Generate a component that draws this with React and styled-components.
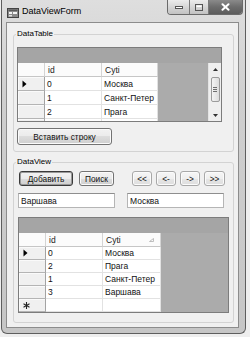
import styled, { createGlobalStyle } from "styled-components";

const GlobalStyle = createGlobalStyle`
  html, body {
    margin: 0;
    padding: 0;
    background: #eeeeee;
  }
  body {
    width: 250px;
    height: 337px;
    overflow: hidden;
    font-family: "Liberation Sans", Arial, sans-serif;
    color: #111;
  }
`;

const Page = styled.div`
  width: 250px;
  height: 337px;
  padding-left: 1px;
  box-sizing: border-box;
  background: #eeeeee;
`;

const Window = styled.div`
  width: 245px;
  height: 334px;
  box-sizing: border-box;
  border: 1px solid #5e5e5e;
  border-top: none;
  border-radius: 0 0 6px 6px;
  background: linear-gradient(180deg, #dedede 0%, #cfcfcf 30%, #c6c6c6 100%);
  display: flex;
  flex-direction: column;
`;

const TitleBar = styled.div`
  height: 22px;
  flex: none;
  display: flex;
  align-items: flex-start;
  padding: 0 2px 0 5px;
`;

const TitleIcon = styled.svg`
  margin-top: 8px;
  flex: none;
`;

const TitleText = styled.div`
  margin: 6px 0 0 3px;
  font-size: 9px;
  line-height: 11px;
  color: #000;
`;

const CaptionButtons = styled.div`
  margin-left: auto;
  display: flex;
  height: 15px;
  border: 1px solid #6a6a6a;
  border-top: none;
  border-radius: 0 0 4px 4px;
  overflow: hidden;
  box-sizing: border-box;
`;

const CaptionButton = styled.div`
  width: ${(p) => p.$w}px;
  display: flex;
  align-items: center;
  justify-content: center;
  box-sizing: border-box;
  border-left: ${(p) => (p.$first ? "none" : "1px solid #7a7a7a")};
  background: ${(p) =>
    p.$close
      ? "linear-gradient(180deg, #8a8a8a 0%, #6c6c6c 50%, #5c5c5c 100%)"
      : "linear-gradient(180deg, #ececec 0%, #d6d6d6 50%, #c2c2c2 100%)"};
`;

const Client = styled.div`
  flex: 1;
  margin: 0 6px 5px 4px;
  border: 1px solid #8c8c8c;
  background: #f0f0f0;
  padding: 6px 4px 0 6px;
  display: flex;
  flex-direction: column;
  gap: 5px;
`;

const GroupBox = styled.fieldset`
  margin: 0;
  padding: 0;
  min-width: 0;
  border: 1px solid #d3d3d3;
  border-radius: 3px;
`;

const Legend = styled.legend`
  padding: 0 1px;
  margin-left: 2px;
  font-size: 8px;
  line-height: 10px;
  font-weight: normal;
  color: #000;
`;

const GroupBody = styled.div`
  padding: ${(p) => p.$pad};
  display: flex;
  flex-direction: column;
  align-items: flex-start;
  gap: ${(p) => p.$gap};
`;

const Button = styled.button`
  width: ${(p) => p.$w}px;
  height: ${(p) => p.$h || 15}px;
  padding: 0;
  margin: 0;
  box-sizing: border-box;
  font-family: "Liberation Sans", Arial, sans-serif;
  font-size: 8.3px;
  color: #111;
  border: 1px solid ${(p) => (p.$default ? "#3a3a3a" : p.$light ? "#a8a8a8" : "#737373")};
  border-radius: 3px;
  box-shadow: inset 0 0 0 1px ${(p) => (p.$default ? "#9a9a9a" : "#fbfbfb")};
  background: ${(p) =>
    p.$light
      ? "linear-gradient(180deg, #f6f6f6 0%, #efefef 50%, #e6e6e6 50%, #dedede 100%)"
      : "linear-gradient(180deg, #f2f2f2 0%, #ebebeb 50%, #dddddd 50%, #cfcfcf 100%)"};
`;

const ButtonRow = styled.div`
  display: flex;
  gap: 6px;
  margin-left: 1px;
`;

const NavGroup = styled.div`
  display: flex;
  gap: 4px;
  margin-left: 12px;
`;

const FieldRow = styled.div`
  display: flex;
  gap: 12px;
`;

const TextBox = styled.input`
  width: 97px;
  height: 15px;
  box-sizing: border-box;
  margin: 0;
  padding: 0 2px;
  border: 1px solid #b5b5b5;
  border-top-color: #8e8e8e;
  background: #fff;
  font-family: "Liberation Sans", Arial, sans-serif;
  font-size: 8.5px;
  color: #111;
  outline: none;
`;

const GridFrame = styled.div`
  width: ${(p) => p.$w}px;
  height: ${(p) => p.$h}px;
  margin-top: ${(p) => p.$mt || 0}px;
  box-sizing: border-box;
  border: 1px solid #7c7c7c;
  background: #ababab;
  display: flex;
  flex-direction: column;
  overflow: hidden;
`;

const GridBand = styled.div`
  height: 15px;
  flex: none;
  background: #a5a5a5;
`;

const GridBody = styled.div`
  flex: 1;
  min-height: 0;
  display: flex;
`;

const Table = styled.div`
  flex: 1;
  display: grid;
  grid-template-columns: 27px 57px ${(p) => p.$last}px;
  grid-template-rows: 14px;
  grid-auto-rows: ${(p) => p.$row}px;
  align-content: start;
  justify-content: start;
  overflow: hidden;
  font-size: 8.5px;
`;

const HeaderCell = styled.div`
  background: #fbfbfb;
  border-right: 1px solid #d4d4d4;
  border-bottom: 1px solid #c6c6c6;
  padding-left: 3px;
  display: flex;
  align-items: center;
  justify-content: space-between;
  padding-right: 6px;
  box-sizing: border-box;
  color: #222;
`;

const RowHeader = styled.div`
  background: #f0f0f0;
  border-right: 1px solid #a3a3a3;
  border-bottom: 1px solid #b4b4b4;
  box-shadow: inset 1px 1px 0 #fafafa;
  display: flex;
  align-items: center;
  padding-left: 4px;
  box-sizing: border-box;
`;

const Cell = styled.div`
  background: #fff;
  border-right: 1px solid #e2e2e2;
  border-bottom: 1px solid #e2e2e2;
  padding-left: 2px;
  display: flex;
  align-items: center;
  white-space: nowrap;
  overflow: hidden;
  box-sizing: border-box;
  color: #111;
`;

const ScrollBar = styled.div`
  width: 13px;
  flex: none;
  background: #efefef;
  border-left: 1px solid #e4e4e4;
  display: flex;
  flex-direction: column;
  align-items: center;
  box-sizing: border-box;
`;

const ScrollArrow = styled.div`
  height: 12px;
  display: flex;
  align-items: center;
  justify-content: center;
`;

const ScrollThumb = styled.div`
  width: 9px;
  height: 25px;
  margin-top: 2px;
  border: 1px solid #9b9b9b;
  border-radius: 2px;
  box-sizing: border-box;
  background: linear-gradient(90deg, #f4f4f4, #dcdcdc);
  display: flex;
  flex-direction: column;
  align-items: center;
  justify-content: center;
  gap: 1px;
`;

const Grip = styled.div`
  width: 4px;
  height: 1px;
  background: #6e6e6e;
`;

const ScrollSpacer = styled.div`
  flex: 1;
`;

const CurrentGlyph = () => (
  <svg width="5" height="8" viewBox="0 0 5 8">
    <path d="M0.5 0.5 L4.5 4 L0.5 7.5 Z" fill="#000" />
  </svg>
);

const NewRowGlyph = () => (
  <svg width="7" height="7" viewBox="0 0 7 7">
    <g stroke="#222" strokeWidth="1.1">
      <line x1="3.5" y1="0" x2="3.5" y2="7" />
      <line x1="0.5" y1="1.8" x2="6.5" y2="5.2" />
      <line x1="0.5" y1="5.2" x2="6.5" y2="1.8" />
    </g>
  </svg>
);

const SortGlyph = () => (
  <svg width="5" height="4" viewBox="0 0 5 4">
    <path d="M4.5 0.5 L4.5 3.5 L0.5 3.5 Z" fill="none" stroke="#b0b0b0" strokeWidth="0.8" />
  </svg>
);

const DataGrid = ({ w, h, mt, rowH, lastCol, rows, scroll, sorted }) => (
  <GridFrame $w={w} $h={h} $mt={mt}>
    <GridBand />
    <GridBody>
      <Table $row={rowH} $last={lastCol}>
        <HeaderCell />
        <HeaderCell>id</HeaderCell>
        <HeaderCell>
          Cyti
          {sorted && <SortGlyph />}
        </HeaderCell>
        {rows.map(([id, city], i) => [
          <RowHeader key={`h${i}`}>{i === 0 && <CurrentGlyph />}</RowHeader>,
          <Cell key={`i${i}`}>{id}</Cell>,
          <Cell key={`c${i}`}>{city}</Cell>,
        ])}
        <RowHeader>
          <NewRowGlyph />
        </RowHeader>
        <Cell />
        <Cell />
      </Table>
      {scroll && (
        <ScrollBar>
          <ScrollArrow>
            <svg width="5" height="3" viewBox="0 0 5 3">
              <path d="M0 3 L2.5 0 L5 3 Z" fill="#333" />
            </svg>
          </ScrollArrow>
          <ScrollThumb>
            <Grip />
            <Grip />
            <Grip />
          </ScrollThumb>
          <ScrollSpacer />
          <ScrollArrow>
            <svg width="5" height="3" viewBox="0 0 5 3">
              <path d="M0 0 L2.5 3 L5 0 Z" fill="#333" />
            </svg>
          </ScrollArrow>
        </ScrollBar>
      )}
    </GridBody>
  </GridFrame>
);

const tableRows = [
  ["0", "Москва"],
  ["1", "Санкт-Петер"],
  ["2", "Прага"],
];

const viewRows = [
  ["0", "Москва"],
  ["2", "Прага"],
  ["1", "Санкт-Петер"],
  ["3", "Варшава"],
];

const App = () => (
  <Page>
    <GlobalStyle />
    <Window>
      <TitleBar>
        <TitleIcon width="12" height="10" viewBox="0 0 12 10">
          <rect x="0.5" y="0.5" width="11" height="9" fill="#8a8a8a" stroke="#444" />
          <rect x="1.5" y="1.5" width="9" height="1.5" fill="#5a5a5a" />
          <rect x="2" y="4" width="3" height="2" fill="#f4f4f4" />
          <rect x="6" y="4" width="4" height="2" fill="#f4f4f4" />
          <rect x="2" y="7" width="3" height="1.5" fill="#e0e0e0" />
        </TitleIcon>
        <TitleText>DataViewForm</TitleText>
        <CaptionButtons>
          <CaptionButton $w={21} $first>
            <svg width="8" height="3" viewBox="0 0 8 3">
              <rect x="0.5" y="0.5" width="7" height="2" fill="#fff" stroke="#555" />
            </svg>
          </CaptionButton>
          <CaptionButton $w={19}>
            <svg width="8" height="7" viewBox="0 0 8 7">
              <rect x="0.5" y="0.5" width="7" height="6" fill="none" stroke="#555" />
              <rect x="1.5" y="1.5" width="5" height="1.5" fill="#fff" />
            </svg>
          </CaptionButton>
          <CaptionButton $w={34} $close>
            <svg width="9" height="8" viewBox="0 0 9 8">
              <g stroke="#fff" strokeWidth="2" strokeLinecap="round">
                <line x1="1.5" y1="1.2" x2="7.5" y2="6.8" />
                <line x1="7.5" y1="1.2" x2="1.5" y2="6.8" />
              </g>
            </svg>
          </CaptionButton>
        </CaptionButtons>
      </TitleBar>
      <Client>
        <GroupBox>
          <Legend>DataTable</Legend>
          <GroupBody $pad="8px 0 6px 3px" $gap="6px">
            <DataGrid w={205} h={75} rowH={14} lastCol={56} rows={tableRows} scroll />
            <Button $w={95} $h={17}>
              Вставить строку
            </Button>
          </GroupBody>
        </GroupBox>
        <GroupBox>
          <Legend>DataView</Legend>
          <GroupBody $pad="4px 0 9px 4px" $gap="7px">
            <ButtonRow>
              <Button $w={54} $default>
                Добавить
              </Button>
              <Button $w={35}>Поиск</Button>
              <NavGroup>
                <Button $w={20} $light>
                  &lt;&lt;
                </Button>
                <Button $w={20} $light>
                  &lt;-
                </Button>
                <Button $w={20} $light>
                  -&gt;
                </Button>
                <Button $w={21} $light>
                  &gt;&gt;
                </Button>
              </NavGroup>
            </ButtonRow>
            <FieldRow>
              <TextBox readOnly value="Варшава" />
              <TextBox readOnly value="Москва" />
            </FieldRow>
            <DataGrid w={211} h={96} mt={2} rowH={13} lastCol={58} rows={viewRows} sorted />
          </GroupBody>
        </GroupBox>
      </Client>
    </Window>
  </Page>
);

export default App;
